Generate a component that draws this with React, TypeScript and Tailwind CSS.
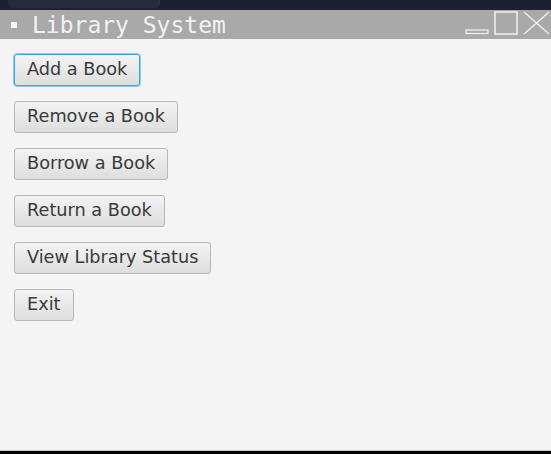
import React from "react";

const buttons = [
  "Add a Book",
  "Remove a Book",
  "Borrow a Book",
  "Return a Book",
  "View Library Status",
  "Exit",
];

function WindowControls() {
  return (
    <div className="flex items-end gap-[5px] pr-[1px] pb-[3px]">
      <svg width="24" height="6" viewBox="0 0 24 6">
        <rect x="1" y="1" width="22" height="3.5" fill="none" stroke="#f2f2f2" strokeWidth="1.2" />
      </svg>
      <svg width="24" height="24" viewBox="0 0 24 24">
        <rect x="1" y="1" width="22" height="22" fill="none" stroke="#f2f2f2" strokeWidth="1.5" />
      </svg>
      <svg width="27" height="24" viewBox="0 0 27 24">
        <path d="M1 1 L26 23 M26 1 L1 23" stroke="#f2f2f2" strokeWidth="1.3" fill="none" />
      </svg>
    </div>
  );
}

export default function App() {
  return (
    <div className="w-[551px] h-[454px] flex flex-col bg-[#f4f4f4] overflow-hidden">
      {/* host desktop strip */}
      <div className="h-[10px] bg-[#1b2032] relative shrink-0">
        <div className="absolute left-[8px] top-0 w-[152px] h-[8px] bg-[#252b3f] rounded-b-[6px] border-r border-[#2f3549]" />
      </div>

      {/* title bar */}
      <div className="h-[29px] bg-[#a9a9a9] flex items-center justify-between shrink-0">
        <div className="flex items-center">
          <div className="w-[6px] h-[6px] bg-[#f5f5f5] ml-[11px] mr-[15px]" />
          <span
            className="text-[23px] leading-none text-[#f2f2f2] mt-[1px]"
            style={{ fontFamily: '"DejaVu Sans Mono", monospace' }}
          >
            Library System
          </span>
        </div>
        <WindowControls />
      </div>

      {/* content */}
      <div
        className="flex-1 flex flex-col items-start gap-[15px] pt-[15px] pl-[14px]"
        style={{ fontFamily: '"DejaVu Sans", sans-serif' }}
      >
        {buttons.map((label, i) => (
          <button
            key={label}
            className={
              "h-[32px] px-[12px] rounded-[3px] border text-[17.7px] leading-none text-[#3a3a3a] bg-gradient-to-b from-[#f3f3f3] to-[#dedede] " +
              (i === 0
                ? "border-[#3fa4d6] shadow-[0_0_0_1px_#8fcbea]"
                : "border-[#b8b8b8]")
            }
          >
            {label}
          </button>
        ))}
      </div>

      {/* bottom edge */}
      <div className="h-[1px] bg-[#c8c8c8] shrink-0" />
      <div className="h-[3px] bg-black shrink-0" />
    </div>
  );
}
